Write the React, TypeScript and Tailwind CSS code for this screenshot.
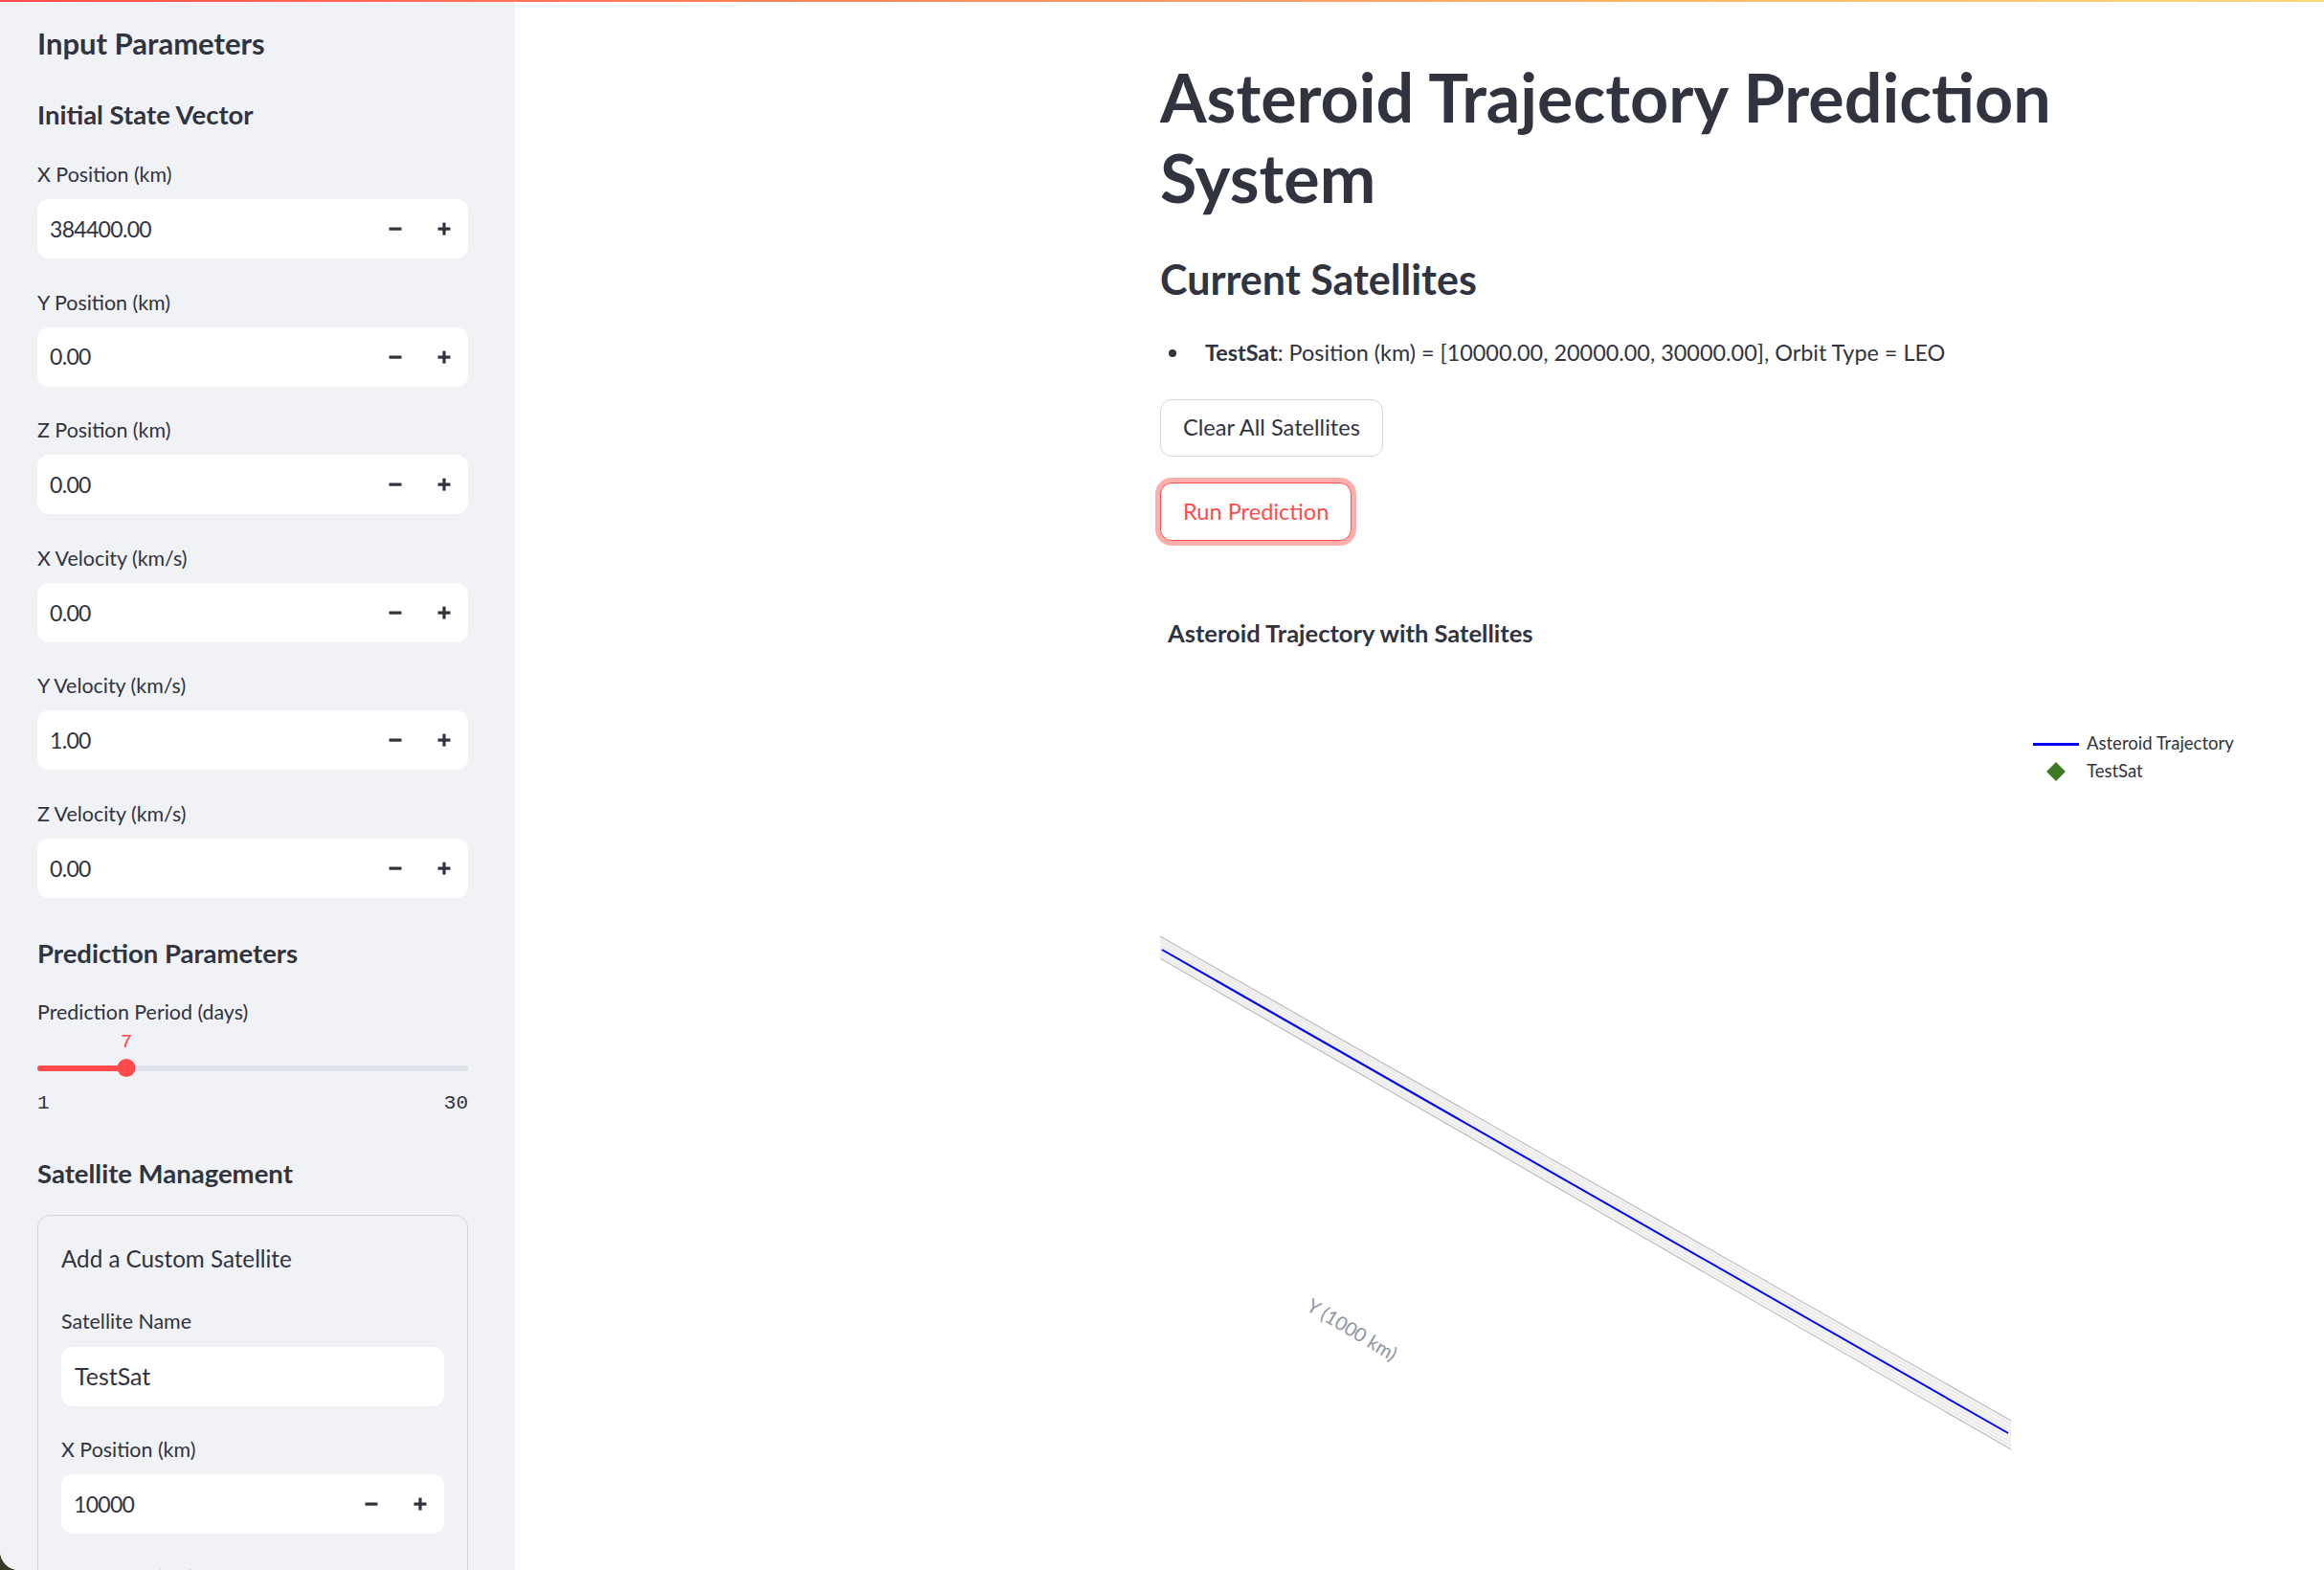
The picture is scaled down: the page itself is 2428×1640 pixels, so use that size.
import React from 'react';

const INK = 'text-[#31333f]';

function MinusIcon() {
  return (
    <svg width="14" height="14" viewBox="0 0 14 14">
      <rect x="0.5" y="5.5" width="13" height="3.2" fill="#31333f" />
    </svg>
  );
}

function PlusIcon() {
  return (
    <svg width="14" height="14" viewBox="0 0 14 14">
      <rect x="0.5" y="5.5" width="13" height="3.2" fill="#31333f" />
      <rect x="5.4" y="0.6" width="3.2" height="13" fill="#31333f" />
    </svg>
  );
}

function NumberBox({ value }: { value: string }) {
  return (
    <div className="mt-[10px] h-[62px] rounded-[12px] bg-white flex items-center">
      <span className={`flex-1 pl-[13px] text-[23px] tracking-[-0.03em] ${INK}`}>{value}</span>
      <span className="w-[51px] h-full flex items-center justify-center">
        <MinusIcon />
      </span>
      <span className="w-[51px] h-full flex items-center justify-center">
        <PlusIcon />
      </span>
    </div>
  );
}

function Field({ label, value }: { label: string; value: string }) {
  return (
    <div className="flex flex-col">
      <label className={`h-[32px] leading-[32px] text-[21.4px] ${INK}`}>{label}</label>
      <NumberBox value={value} />
    </div>
  );
}

const stateFields = [
  { label: 'X Position (km)', value: '384400.00' },
  { label: 'Y Position (km)', value: '0.00' },
  { label: 'Z Position (km)', value: '0.00' },
  { label: 'X Velocity (km/s)', value: '0.00' },
  { label: 'Y Velocity (km/s)', value: '1.00' },
  { label: 'Z Velocity (km/s)', value: '0.00' },
];

function PeriodSlider({ value, min, max }: { value: number; min: number; max: number }) {
  const pct = ((value - min) / (max - min)) * 100;
  return (
    <div className="relative">
      {/* value bubble */}
      <div className="relative h-[31px]">
        <span
          className="absolute top-0 -translate-x-1/2 leading-[31px] text-[21px] text-[#ff4b4b] font-['Liberation_Mono',monospace]"
          style={{ left: `${pct}%` }}
        >
          {value}
        </span>
      </div>
      <div className="relative h-[24px] flex items-center">
        <div className="w-full h-[6px] rounded-full bg-[#dfe1e8]" />
        <div className="absolute left-0 h-[6px] rounded-full bg-[#ff4b4b]" style={{ width: `${pct}%` }} />
        <div
          className="absolute w-[19px] h-[19px] rounded-full bg-[#ff4b4b] -translate-x-1/2"
          style={{ left: `${pct}%` }}
        />
      </div>
      <div className={`h-[50px] flex justify-between items-center text-[21px] font-['Liberation_Mono',monospace] ${INK}`}>
        <span>{min}</span>
        <span>{max}</span>
      </div>
    </div>
  );
}

function Sidebar() {
  return (
    <aside className="w-[538px] shrink-0 h-full bg-[#f0f2f6] pl-[39px] pr-[49px] pt-[25px] overflow-hidden">
      <h2 className={`text-[31px] leading-[40px] font-bold ${INK}`}>Input Parameters</h2>
      <h3 className={`mt-[38px] text-[27.5px] leading-[34px] font-bold ${INK}`}>Initial State Vector</h3>

      <div className="mt-[29px] flex flex-col gap-[29.6px]">
        {stateFields.map((f) => (
          <Field key={f.label} label={f.label} value={f.value} />
        ))}
      </div>

      <h3 className={`mt-[41px] text-[27.5px] leading-[34px] font-bold ${INK}`}>Prediction Parameters</h3>
      <div className={`mt-[28px] h-[32px] leading-[32px] text-[21.4px] ${INK}`}>Prediction Period (days)</div>
      <PeriodSlider value={7} min={1} max={30} />

      <h3 className={`mt-[31px] text-[27.5px] leading-[34px] font-bold ${INK}`}>Satellite Management</h3>

      <div className="mt-[26px] border border-[#d3d5db] rounded-[13px] px-[24px] pt-[24px] pb-[30px]">
        <p className={`text-[24.2px] leading-[41px] ${INK}`}>Add a Custom Satellite</p>

        <div className="mt-[29px] flex flex-col">
          <label className={`h-[32px] leading-[32px] text-[21.4px] ${INK}`}>Satellite Name</label>
          <div className="mt-[11px] h-[62px] rounded-[12px] bg-white flex items-center pl-[14px]">
            <span className={`text-[25px] ${INK}`}>TestSat</span>
          </div>
        </div>

        <div className="mt-[29.5px] flex flex-col gap-[29.6px]">
          <Field label="X Position (km)" value="10000" />
          <Field label="Y Position (km)" value="20000" />
        </div>
      </div>
    </aside>
  );
}

function TrajectoryChart() {
  // band of grid lines seen almost edge-on, with the asteroid path inside
  const upL = 361, upR = 867, loL = 384, loR = 897, x0 = 0, x1 = 889;
  const gridLines = Array.from({ length: 9 }, (_, i) => {
    const t = i / 8;
    return { yl: upL + (loL - upL) * t, yr: upR + (loR - upR) * t, edge: i === 0 || i === 8 };
  });
  return (
    <div className="relative mt-[52px] h-[1020px]">
      <div className={`pl-[8px] pt-[30px] text-[25.5px] leading-[28px] font-bold ${INK}`}>
        Asteroid Trajectory with Satellites
      </div>

      <svg className="absolute inset-0" width="1126" height="1020" viewBox="0 0 1126 1020">
        <polygon points={`${x0},${upL} ${x1},${upR} ${x1},${loR} ${x0},${loL}`} fill="#f5f5f5" />
        {gridLines.map((g, i) => (
          <line
            key={i}
            x1={x0}
            y1={g.yl}
            x2={x1}
            y2={g.yr}
            stroke={g.edge ? '#bdbdbd' : '#dedede'}
            strokeWidth={g.edge ? 1.2 : 0.8}
          />
        ))}
        <line x1="2" y1="375" x2="886" y2="880" stroke="#0000ff" strokeWidth="2" />
        <text
          x="200"
          y="779"
          textAnchor="middle"
          transform="rotate(31 200 773)"
          fill="#8f93a3"
          fontSize="20"
          fontFamily="Lato, sans-serif"
        >
          Y (1000 km)
        </text>
      </svg>

      {/* legend */}
      <div className="absolute left-[912px] top-[146px] flex flex-col text-[18.5px] text-[#31333f]">
        <div className="h-[28px] flex items-center">
          <span className="w-[48px] h-[3px] bg-[#0000ff]" />
          <span className="ml-[8px]">Asteroid Trajectory</span>
        </div>
        <div className="h-[29px] flex items-center">
          <span className="w-[48px] flex justify-center">
            <span className="w-[14px] h-[14px] rotate-45 bg-[#3a7b22]" />
          </span>
          <span className="ml-[8px]">TestSat</span>
        </div>
      </div>
    </div>
  );
}

function MainArea() {
  return (
    <main className="flex-1 h-full bg-white pl-[674px] pt-[59px] overflow-hidden">
      <div className="w-[1126px]">
        <h1 className={`text-[70px] leading-[84px] font-bold ${INK}`}>
          Asteroid Trajectory Prediction System
        </h1>

        <h2 className={`mt-[38px] text-[43px] leading-[54px] font-bold ${INK}`}>Current Satellites</h2>

        <ul className="mt-[29.5px]">
          <li className={`flex items-center h-[41px] text-[23.4px] ${INK}`}>
            <span className="w-[47px] flex">
              <span className="ml-[9px] w-[8px] h-[8px] rounded-full bg-[#31333f]" />
            </span>
            <span>
              <strong className="font-bold">TestSat</strong>: Position (km) = [10000.00, 20000.00, 30000.00], Orbit Type = LEO
            </span>
          </li>
        </ul>

        <div className="mt-[27.5px] flex flex-col items-start">
          <button className={`h-[60px] px-[23px] rounded-[12px] border border-[#d6d6d9] bg-white text-[23.6px] ${INK}`}>
            Clear All Satellites
          </button>
          <button className="mt-[27px] h-[61px] px-[23px] rounded-[12px] border border-[#ff4b4b] bg-white text-[23.6px] text-[#ff4b4b] shadow-[0_0_0_5px_rgba(255,75,75,0.45)]">
            Run Prediction
          </button>
        </div>

        <TrajectoryChart />
      </div>
    </main>
  );
}

export default function App() {
  return (
    <div className="relative w-[2428px] h-[1640px] bg-[#3a3829] overflow-hidden font-['Lato',sans-serif]">
      <div className="w-full h-full flex rounded-bl-[20px] overflow-hidden bg-white">
        <Sidebar />
        <MainArea />
      </div>
      <div className="absolute top-0 left-0 right-0 h-[2px] bg-gradient-to-r from-[#ff4b4b] to-[#ffda77]" />
    </div>
  );
}
